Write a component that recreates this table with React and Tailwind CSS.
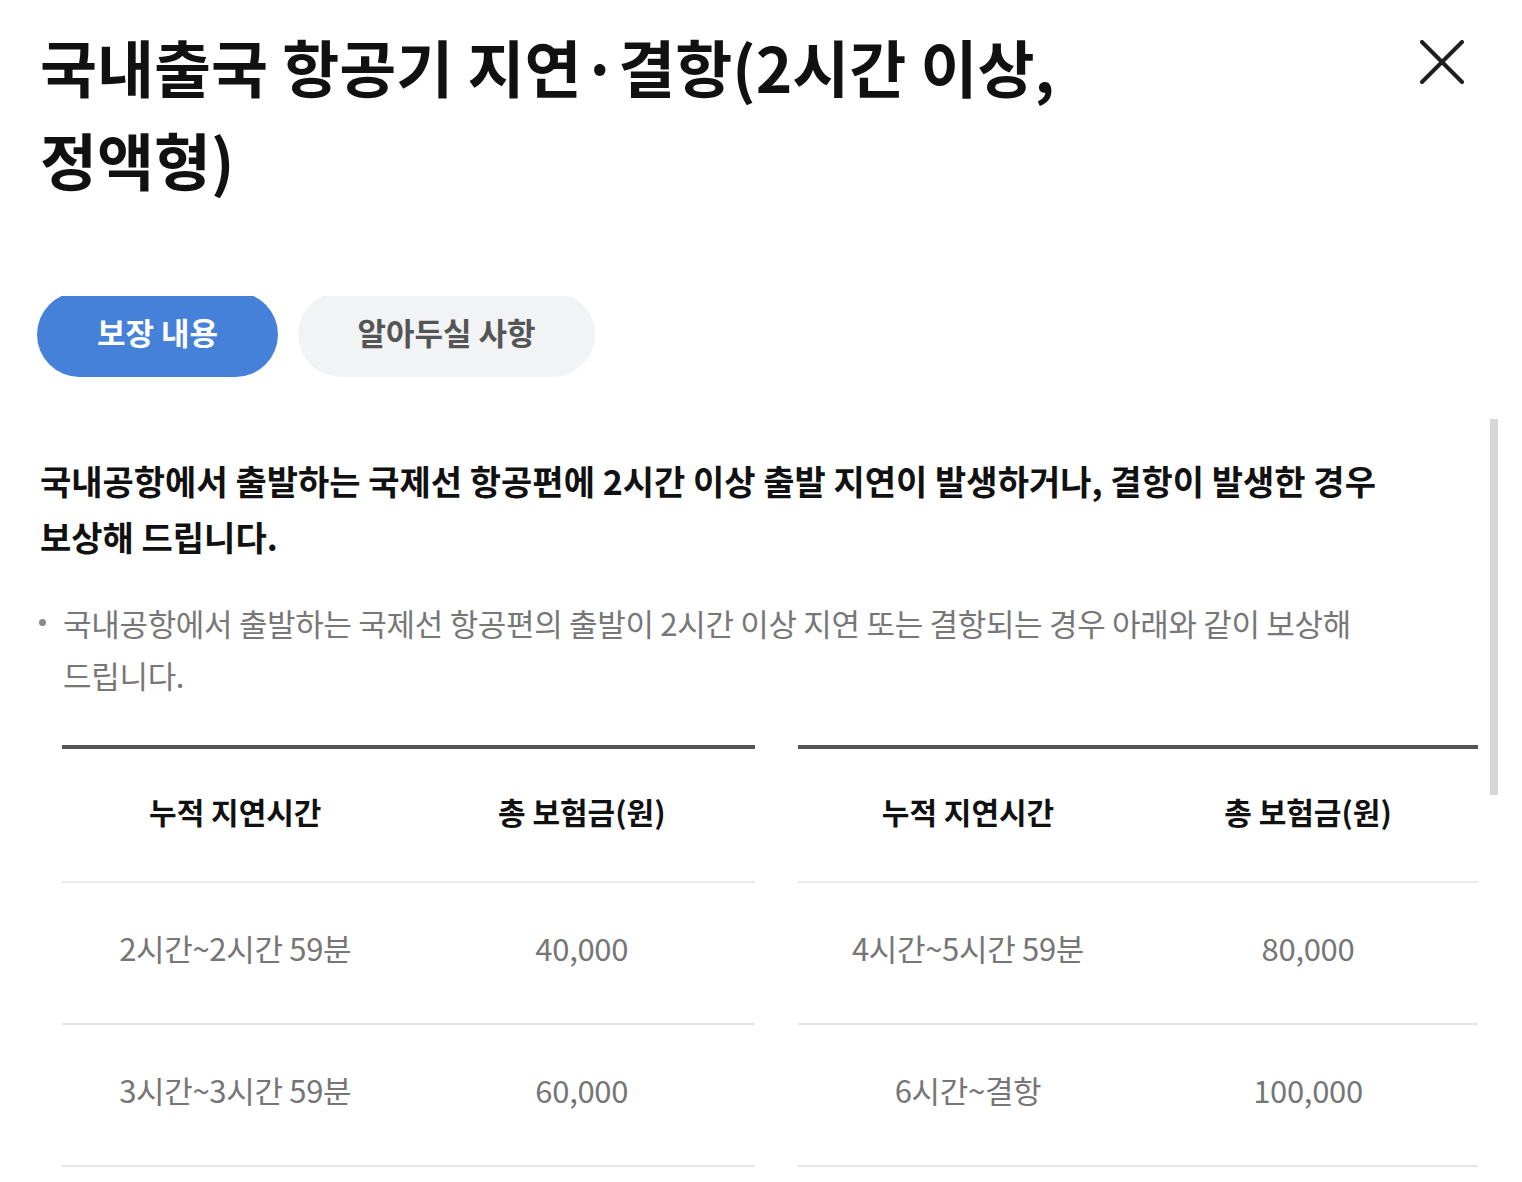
import React from "react";

const font = { fontFamily: '"Noto Sans CJK KR", "Noto Sans", sans-serif' };

function Table({ width, rows }) {
  return (
    <div className={`${width} border-t-4 border-[#555555]`}>
      <div className="grid grid-cols-2 h-[134px] border-b-2 border-[#ebebeb] items-center text-center text-[30px] font-bold text-[#111111] pb-[8px]">
        <div>누적 지연시간</div>
        <div>총 보험금(원)</div>
      </div>
      {rows.map((r, i) => (
        <div
          key={i}
          className="grid grid-cols-2 h-[142px] border-b-2 border-[#e6e6e6] items-center text-center text-[31px] text-[#767676] tracking-[-0.01em] pb-[10px]"
        >
          <div>{r[0]}</div>
          <div>{r[1]}</div>
        </div>
      ))}
    </div>
  );
}

export default function App() {
  return (
    <div style={font} className="relative w-[1522px] h-[1182px] overflow-hidden bg-white">
      <header className="flex items-start justify-between h-[296px] pl-[40px] pr-[58px] pt-[20px]">
        <h1 className="w-[1090px] text-[62px] leading-[93px] font-bold text-[#111111] break-keep">
          국내출국 항공기 지연·결항(2시간 이상, 정액형)
        </h1>
        <button className="mt-[20px] w-[44px] h-[44px]" aria-label="닫기">
          <svg width="44" height="44" viewBox="0 0 44 44" fill="none">
            <path d="M2 2 L42 42 M42 2 L2 42" stroke="#1f1f1f" strokeWidth="4" strokeLinecap="round" />
          </svg>
        </button>
      </header>

      <div className="h-[886px] overflow-hidden">
        <div className="flex gap-[20px] pl-[37px] -mt-[4px]">
          <div className="flex items-center justify-center w-[241px] h-[85px] pb-[5px] rounded-full bg-[#4580d9] text-white text-[31px] font-bold">
            보장 내용
          </div>
          <div className="flex items-center justify-center w-[297px] h-[85px] pb-[5px] rounded-full bg-[#f2f3f5] text-[#555555] text-[31px] font-semibold">
            알아두실 사항
          </div>
        </div>

        <div className="pl-[40px] pr-[102px] pt-[76px]">
          <p className="text-[34px] leading-[56px] font-bold text-[#111111] break-keep">
            국내공항에서 출발하는 국제선 항공편에 2시간 이상 출발 지연이 발생하거나, 결항이 발생한 경우 보상해 드립니다.
          </p>
          <div className="flex mt-[32px] text-[31px] leading-[52px] text-[#777777] tracking-[-0.01em]">
            <span className="w-[23px] shrink-0 pt-[22px]">
              <span className="block w-[7px] h-[7px] -ml-[1px] rounded-full bg-[#8a8a8a]" />
            </span>
            <p className="break-keep">
              국내공항에서 출발하는 국제선 항공편의 출발이 2시간 이상 지연 또는 결항되는 경우 아래와 같이 보상해 드립니다.
            </p>
          </div>
        </div>

        <div className="flex gap-[43px] pl-[62px] mt-[44px]">
          <Table
            width="w-[693px]"
            rows={[
              ["2시간~2시간 59분", "40,000"],
              ["3시간~3시간 59분", "60,000"],
            ]}
          />
          <Table
            width="w-[680px]"
            rows={[
              ["4시간~5시간 59분", "80,000"],
              ["6시간~결항", "100,000"],
            ]}
          />
        </div>
      </div>

      <div className="absolute left-[1490px] top-[419px] w-[8px] h-[376px] bg-[#d7d7d7]" />
    </div>
  );
}
